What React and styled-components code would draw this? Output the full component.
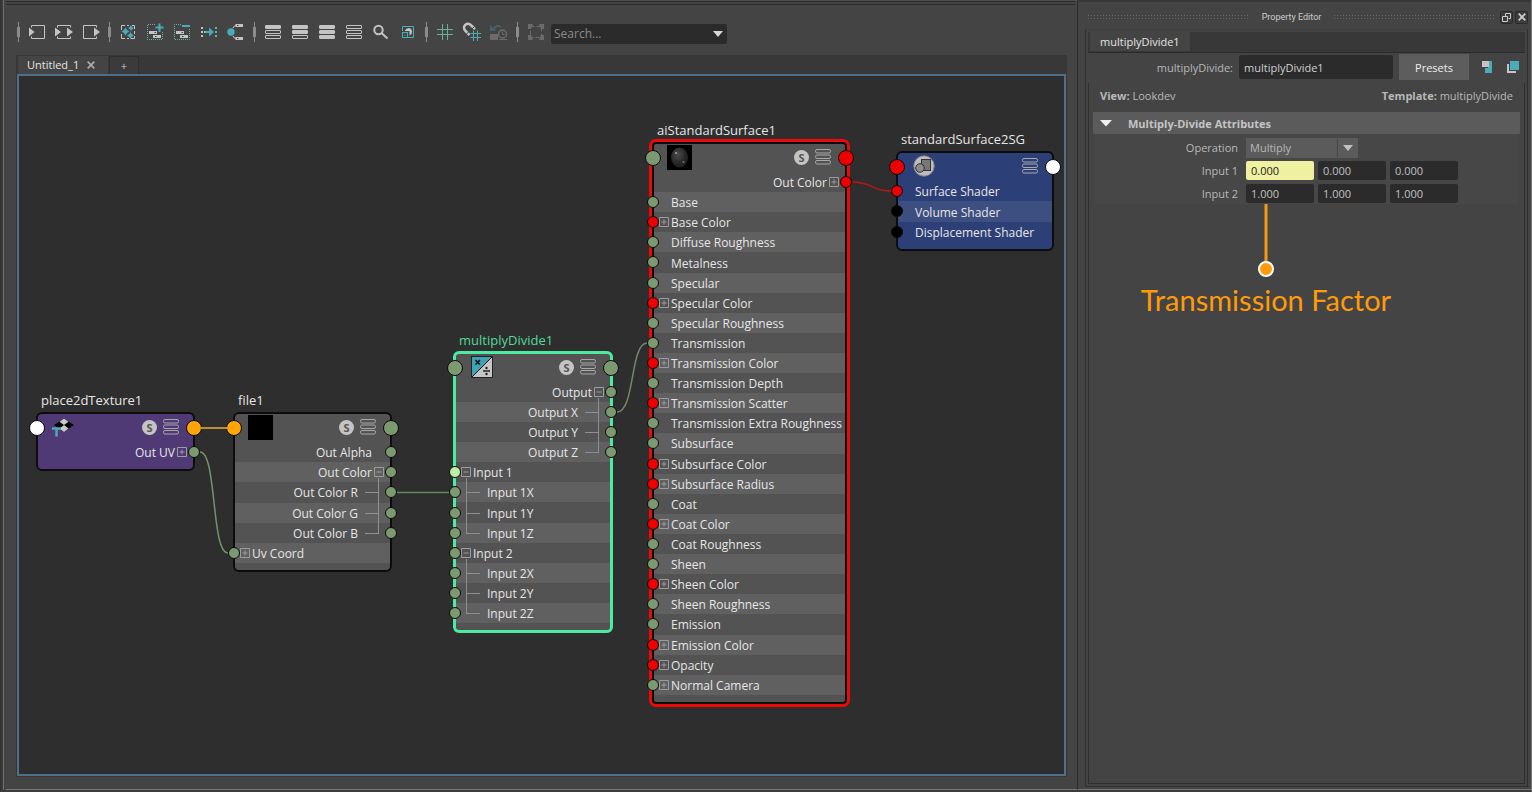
import React from 'react';
import styled, { createGlobalStyle, css } from 'styled-components';

const GlobalStyle = createGlobalStyle`
  *, *::before, *::after { box-sizing: border-box; }
  html, body { margin: 0; background: #444; }
  body { font-family: 'Open Sans', 'Noto Sans', sans-serif; font-size: 11px; color: #ccc; }
  button, input, select { font: inherit; color: inherit; }
  h1, h2, p { margin: 0; font: inherit; }
`;

const Window = styled.div`
  display: grid;
  grid-template-columns: minmax(0, 1fr) 453px;
  height: 100vh;
  min-height: 740px;
  border-left: 1px solid #333;
  border-right: 1px solid #777;
  box-shadow: inset 2px 0 0 #3a3a3a, inset 3px 0 0 #6c6c6c;
  border-bottom: 2px solid #3c3c3c;
  background: #444;
`;

/* Node editor */

const Editor = styled.main`
  display: flex;
  flex-direction: column;
  min-width: 0;
  margin-left: 5px;
  border-top: 1px solid #4a4a4a;
  border-right: 1px solid #2b2b2b;
  border-bottom: 1px solid #777;
`;

const DockEdge = styled.div`
  height: 4px;
  margin-right: 2px;
  border-top: 1px solid #2b2b2b;
  border-bottom: 1px solid #2b2b2b;
  flex: none;
`;

const Toolbar = styled.div`
  display: flex;
  align-items: center;
  height: 50px;
  padding: 4px 0 0 7px;
  flex: none;
`;

const ToolButton = styled.button`
  display: grid;
  place-items: center;
  width: 27px;
  height: 24px;
  padding: 0;
  border: 0;
  background: none;
  flex: none;
  opacity: ${(p) => (p.$faded ? 0.3 : 1)};
`;

const Separator = styled.span`
  display: grid;
  place-items: center;
  width: 10px;
  height: 20px;
  flex: none;
  background:
    linear-gradient(#8c8c8c, #8c8c8c) center / 3px 10px no-repeat,
    linear-gradient(#8c8c8c, #8c8c8c) center / 1px 20px no-repeat;
`;

const SearchBox = styled.div`
  display: flex;
  align-items: center;
  width: 176px;
  height: 20px;
  margin: 3px 0 0 2px;
  border-radius: 2px;
  background: #2b2b2b;
`;

const SearchInput = styled.input`
  flex: 1;
  min-width: 0;
  height: 20px;
  padding: 0 3px;
  border: 0;
  background: none;
  font-size: 12px;
  outline: none;
  &::placeholder { color: #8a8a8a; opacity: 1; }
`;

const SearchArrow = styled.button`
  display: grid;
  place-items: center;
  width: 19px;
  height: 20px;
  padding: 0;
  border: 0;
  background: none;
`;

const Workspace = styled.section`
  display: flex;
  flex-direction: column;
  flex: 1;
  min-height: 0;
  margin: 0 10px 12px 10px;
  border: 1px solid #363636;
  background: #383838;
`;

const TabStrip = styled.div`
  display: flex;
  gap: 1px;
  height: 18px;
  padding-left: 1px;
  flex: none;
`;

const GraphTab = styled.div`
  display: flex;
  align-items: center;
  gap: 8px;
  width: 90px;
  padding-left: 9px;
  background: #444;
  color: #e4e4e4;
`;

const TabText = styled.button`
  padding: 0;
  border: 0;
  background: none;
  line-height: 20px;
`;

const IconButton = styled.button`
  display: grid;
  place-items: center;
  padding: 0;
  border: 0;
  background: none;
`;

const AddTab = styled.button`
  width: 30px;
  padding: 0;
  border: 1px solid #303030;
  border-bottom: 0;
  border-radius: 2px 2px 0 0;
  background: #3b3b3b;
  color: #ccc;
  line-height: 16px;
`;

const Canvas = styled.div`
  position: relative;
  flex: 1;
  min-height: 0;
  border: 2px solid #4d6f88;
  background: #2e2e2e;
  overflow: hidden;
`;

const Wires = styled.svg`
  position: absolute;
  inset: 0;
  width: 100%;
  height: 100%;
  fill: none;
`;

/* Nodes */

const skins = {
  grey: { base: '#535353', band: '#606060' },
  purple: { base: '#4f3a76', band: '#4f3a76' },
  blue: { base: '#2d3f77', band: '#3d4e80' },
};

const NodeCard = styled.article`
  position: absolute;
  left: ${(p) => p.$x}px;
  top: ${(p) => p.$y}px;
  width: ${(p) => p.$w}px;
  padding-bottom: 7px;
  border: 2px solid #0c0c0c;
  border-radius: 6px;
  background: ${(p) => skins[p.$skin].base};
  color: #e6e6e6;
  font-size: 12px;
  ${(p) => p.$mark === 'green' && css`border: 3px solid #4ceb9f;`}
  ${(p) => p.$mark === 'red' && css`
    border-radius: 4px;
    box-shadow: 0 0 0 3px #ea0a0a;
  `}
`;

const NodeTitle = styled.h2`
  position: absolute;
  left: 3px;
  bottom: 100%;
  padding-bottom: 4px;
  font-size: 13px;
  line-height: 20px;
  white-space: nowrap;
  color: ${(p) => (p.$mark === 'green' ? '#4fdc9b' : '#e6e6e6')};
`;

const NodeHead = styled.header`
  position: relative;
  display: flex;
  align-items: center;
  gap: 6px;
  height: 28px;
  padding: 0 14px 2px 13px;
`;

const HeadSpace = styled.span`
  flex: 1;
`;

const Solo = styled.span`
  display: grid;
  place-items: center;
  width: 15px;
  height: 15px;
  border-radius: 50%;
  background: #c4c4c4;
  color: #555;
  font-size: 11px;
  font-weight: 700;
  line-height: 15px;
`;

const Rows = styled.ul`
  display: flex;
  flex-direction: column;
  height: ${(p) => p.$h}px;
  margin: 0;
  padding: 0;
  list-style: none;
`;

const Row = styled.li`
  position: relative;
  display: flex;
  flex: 1 1 0;
  min-height: 0;
  align-items: center;
  flex-direction: ${(p) => (p.$out ? 'row-reverse' : 'row')};
  padding: 0 ${(p) => (p.$out ? 6 : 5)}px 0 5px;
  gap: 2px;
  white-space: nowrap;
  background: ${(p) => (p.$band ? skins[p.$skin].band : 'transparent')};
`;

const RowLabel = styled.span`
  padding-top: 2px;
  line-height: 20px;
`;

const Slot = styled.span`
  display: grid;
  place-items: center;
  width: ${(p) => (p.$wide ? 24 : 10)}px;
  height: 20px;
  flex: none;
`;

const Dot = styled.span`
  position: absolute;
  top: 50%;
  ${(p) => (p.$side === 'left' ? 'left' : 'right')}: ${(p) => (p.$big ? -9 : -7)}px;
  width: ${(p) => (p.$big ? 16 : 12)}px;
  height: ${(p) => (p.$big ? 16 : 12)}px;
  margin-top: ${(p) => (p.$big ? -8 : -6)}px;
  border: 1px solid #0a0a0a;
  border-radius: 50%;
  background: ${(p) => p.$tone};
`;

const Picture = styled.span`
  display: grid;
  place-items: center;
  width: 25px;
  height: 25px;
  background: ${(p) => (p.$black ? '#000' : 'transparent')};
`;

/* Property editor */

const Panel = styled.aside`
  display: flex;
  flex-direction: column;
  padding: 0 3px 2px 7px;
  border-top: 2px solid #383838;
  border-bottom: 1px solid #777;
`;

const PanelBar = styled.header`
  display: flex;
  align-items: center;
  gap: 12px;
  height: 27px;
  padding: 3px 0 0 2px;
  font-family: Roboto, 'Open Sans', sans-serif;
  font-size: 9px;
  flex: none;
`;

const Grip = styled.span`
  flex: 1;
  height: 6px;
  background: radial-gradient(circle, #777 0 1px, transparent 1px) 0 0 / 3px 3px;
  opacity: 0.75;
`;

const BarButtons = styled.span`
  display: flex;
  gap: 2px;
  margin-left: -8px;
`;

const BarButton = styled.button`
  display: grid;
  place-items: center;
  width: 13px;
  height: 13px;
  padding: 0;
  border: 1px solid #2b2b2b;
  border-radius: 2px;
  background: #3c3c3c;
`;

const PanelFrame = styled.div`
  display: flex;
  flex-direction: column;
  flex: 1;
  padding: 2px;
  border: 1px solid #2f2f2f;
  border-top-color: #404040;
`;

const PanelTabs = styled.div`
  height: 21px;
  padding-left: 2px;
  border-bottom: 1px solid #2b2b2b;
  background: #383838;
`;

const PanelTab = styled.button`
  display: block;
  width: 100px;
  height: 19px;
  padding: 0 0 0 10px;
  border: 0;
  background: #444;
  color: #e4e4e4;
  text-align: left;
`;

const NameRow = styled.div`
  display: flex;
  align-items: center;
  height: 30px;
  padding: 0 6px 2px 0;
`;

const NameLabel = styled.label`
  flex: 1;
  padding-right: 6px;
  text-align: right;
  color: #b8b8b8;
`;

const NameInput = styled.input`
  width: 154px;
  height: 24px;
  padding: 0 5px;
  border: 0;
  border-radius: 2px;
  background: #2b2b2b;
  color: #d0d0d0;
`;

const Presets = styled.button`
  width: 70px;
  height: 26px;
  margin: 0 11px 0 6px;
  padding: 0;
  border: 0;
  background: #5d5d5d;
  color: #eee;
`;

const CopyButtons = styled.span`
  display: flex;
  gap: 12px;
`;

const PanelBody = styled.div`
  flex: 1;
  padding: 0 4px;
  border: 1px solid #2f2f2f;
  border-top: 0;
`;

const Facts = styled.div`
  display: flex;
  justify-content: space-between;
  padding: 6px 7px 9px;
  line-height: 14px;
  color: #b8b8b8;
`;

const SectionHead = styled.button`
  display: flex;
  align-items: center;
  gap: 16px;
  width: 100%;
  height: 22px;
  padding: 0 7px;
  border: 0;
  border-radius: 1px;
  background: #5b5b5b;
  color: #c4c4c4;
  font-weight: 700;
`;

const Fields = styled.div`
  display: flex;
  flex-direction: column;
  gap: 4px;
  margin: 0 2px;
  padding: 4px 0 1px;
  background: #474747;
`;

const Field = styled.div`
  display: flex;
  align-items: center;
  gap: 4px;
  height: 19px;
`;

const FieldLabel = styled.label`
  width: 147px;
  padding-right: 4px;
  text-align: right;
  color: #b8b8b8;
`;

const NumberInput = styled.input`
  width: 68px;
  height: 19px;
  padding: 0 5px;
  border: 0;
  border-radius: 2px;
  background: ${(p) => (p.$lit ? '#eff0a0' : '#2b2b2b')};
  color: ${(p) => (p.$lit ? '#222' : '#c0c0c0')};
`;

const SelectWrap = styled.span`
  display: grid;
  grid-template-columns: 92px 20px;
  height: 20px;
  background: linear-gradient(#474747, #474747) 91px 0 / 1px 100% no-repeat #5b5b5b;
`;

const OperationSelect = styled.select`
  grid-area: 1 / 1 / 2 / 3;
  appearance: none;
  padding: 0 4px;
  border: 0;
  background: none;
  color: #b8b8b8;
`;

const SelectArrow = styled.svg`
  grid-area: 1 / 2;
  place-self: center;
  pointer-events: none;
`;

/* Callout laid over the panel */

const CalloutAnchor = styled.div`
  position: relative;
`;

const Callout = styled.figure`
  position: absolute;
  left: 47px;
  top: 0;
  display: flex;
  flex-direction: column;
  align-items: center;
  width: 252px;
  margin: 0;
  color: #ff9a0a;
`;

const CalloutText = styled.figcaption`
  padding-top: 4px;
  font-family: Lato, 'Noto Sans', sans-serif;
  font-size: 29px;
  line-height: 36px;
  white-space: nowrap;
`;

/* Icons */

const Icon = ({ children, size = 20, box = 20 }) => (
  <svg width={size} height={size} viewBox={`0 0 ${box} ${box}`} fill="none" aria-hidden="true">
    {children}
  </svg>
);

const L = '#c4c4c4';
const T = '#4aacb8';
const G = '#66b296';

const Stack = ({ filled }) => (
  <Icon>
    {[3, 8, 13].map((y, i) => (
      <rect key={y} x="2.5" y={y + 0.5} width="15" height="3" rx="0.5" stroke={L} fill={i < filled ? L : 'none'} />
    ))}
  </Icon>
);

const star = (x, y, r) => `M${x} ${y - r}Q${x + r / 4} ${y - r / 4} ${x + r} ${y}Q${x + r / 4} ${y + r / 4} ${x} ${y + r}Q${x - r / 4} ${y + r / 4} ${x - r} ${y}Q${x - r / 4} ${y - r / 4} ${x} ${y - r}Z`;

const Dotted = ({ plus }) => (
  <Icon>
    <path d={plus ? 'M10 2.5H2.5V17.5H17.5V10' : 'M9 2.5H2.5V17.5H17.5V7'} stroke={G} strokeDasharray="1 1" />
    <path d={plus ? 'M14.5 1.5V10M10.5 5.5H18.5' : 'M10 4H18'} stroke={T} strokeWidth="2" />
    <rect x="4" y="9" width="8" height="3" fill={L} />
    <rect x="8" y="13" width="8" height="3" fill={L} />
    <path d="M9.5 10.5H11M10 14.5H11.5" stroke="#444" />
  </Icon>
);

const toolGroups = [
  [
    ['Input connections', <Icon><path d="M4.5 5.5V3.5H17.5V16.5H4.5V14.5" stroke={L} /><path d="M2 5.5L7.5 10L2 14.5Z" fill={L} /></Icon>],
    ['Input and output connections', <Icon><path d="M3.5 5.5V3.5H16.5V5.5M3.5 14.5V16.5H16.5V14.5" stroke={L} /><path d="M1 5.5L7 10L1 14.5ZM13 5.5L19 10L13 14.5Z" fill={L} /></Icon>],
    ['Output connections', <Icon><path d="M15.5 5.5V3.5H2.5V16.5H15.5V14.5" stroke={L} /><path d="M13 5.5L19 10L13 14.5Z" fill={L} /></Icon>],
  ],
  [
    ['Clear graph', <Icon><path d="M3.5 8V3.5H7M9 3.5H11M14 3.5H16.5V7M16.5 9V12M16.5 14V16.5H13M11 16.5H9M7 16.5H3.5V12" stroke={L} /><path d={star(7.5, 9.5, 4) + star(13, 6, 3) + star(12.5, 13.5, 3.5)} fill={T} /></Icon>],
    ['Add selected nodes', <Dotted plus />],
    ['Remove selected nodes', <Dotted />],
    ['Rearrange graph', <Icon><path d="M2 5h2v2h-2zM2 9h2v2h-2zM2 13h2v2h-2zM5 9h1v2h-1z" fill={L} /><path d="M6 10H11" stroke={T} strokeWidth="2" /><path d="M10 5.5L15 10L10 14.5Z" fill={T} /><path d="M16 5h2v2h-2zM16 9h2v2h-2zM16 13h2v2h-2z" fill={G} /></Icon>],
    ['Traversal depth', <Icon><circle cx="5" cy="10" r="3.7" fill={T} /><path d="M7 6Q8 3.5 10 3.5M7 14Q8 16.5 10 16.5" stroke={L} /><path d="M9.5 2H17V5H9.5ZM9.5 15H17V18H9.5Z" fill={L} /><path d="M11 3.5H12.5M11 16.5H12.5" stroke="#444" /></Icon>],
  ],
  [
    ['Simple view', <Stack filled={1} />],
    ['Connected view', <Stack filled={2} />],
    ['Full view', <Stack filled={3} />],
    ['Custom view', <Stack filled={0} />],
    ['Find nodes', <Icon><circle cx="7.5" cy="8" r="4.2" stroke={L} strokeWidth="2" /><path d="M10.5 11L16.5 16.5" stroke={L} strokeWidth="2" /></Icon>],
    ['Swatch size', <Icon><path d="M4.5 9V4.5H15.5V15.5H10" stroke={T} /><path d="M7 8.5Q8 6 11 6Q14 6.5 14 10Q14 12.5 11.5 13.5V9H7Z" fill={L} /><rect x="4.5" y="10.5" width="5" height="5" fill="#444" stroke={T} /><rect x="6.5" y="12.5" width="1" height="1" fill={T} /></Icon>],
  ],
  [
    ['Toggle grid', <Icon><path d="M7.5 2V18M12.5 2V18M2 7.5H18M2 12.5H18" stroke={G} /></Icon>],
    ['Snap to grid', <Icon><path d="M7.5 13L3 8.5A4 4 0 0 1 8.8 3L13 7.2" stroke={L} strokeWidth="2.5" /><path d="M4.600 12L7 9.600M10 7L12.500 4.500" stroke="#444" /><path d="M11.5 8.5V19M15.5 8.5V19M8.5 11.5H19M8.5 15.5H19" stroke={T} /></Icon>],
    ['Restore last graph', <Icon><path d="M4 8Q7 2 12 5" stroke={T} strokeWidth="2" /><path d="M1 3V9H7Z" fill={T} /><path d="M1 12H9V18H1Z" fill={L} /><circle cx="13.5" cy="12" r="4" stroke={L} strokeWidth="1.5" /><path d="M13.5 9.5V12.5H15.5M10 17.5H18" stroke={L} /></Icon>, true],
  ],
  [
    ['Frame selection', <Icon><rect x="4.5" y="4.5" width="11" height="11" stroke={L} strokeDasharray="4 2" /><path d="M2 2H7L5 7H2ZM18 2H13L15 7H18ZM2 18H7L5 13H2ZM18 18H13L15 13H18Z" fill={L} /></Icon>, true],
  ],
];

const Bars = () => (
  <Icon size={16} box={16}>
    {[0.5, 6, 11.5].map((y) => (
      <rect key={y} x="0.5" y={y} width="15" height="3.5" rx="1.5" stroke="#a9a9a9" />
    ))}
  </Icon>
);

const Expander = ({ open }) => (
  <Icon size={10} box={10}>
    <path d={open ? 'M.5.5H9.5V9.5H.5ZM2.5 5H7.5' : 'M.5.5H9.5V9.5H.5ZM2.5 5H7.5M5 2.5V7.5'} stroke="#9c9c9c" />
  </Icon>
);

const BranchLine = styled.svg`
  display: block;
  overflow: visible;
`;

/* Tree guide for nested attributes, mirrored on the output side. */
const Branch = ({ out, last, first }) => (
  <BranchLine width="24" height="20" viewBox="0 0 24 20" aria-hidden="true">
    <path
      d={out
        ? `M5 10.5H18.5M18.5 ${first ? -4 : 0}V${last ? 11 : 21}`
        : `M19 10.5H5.5M5.5 ${first ? -4 : 0}V${last ? 11 : 21}`}
      stroke="#8f8f8f"
      fill="none"
    />
  </BranchLine>
);

const pictures = {
  texture: (
    <svg width="23" height="20" viewBox="0 0 23 20">
      <path d="M12 1.5L22 8L12 15L2 8Z" fill="#000" />
      <path d="M12 1.500L16.500 4.700L12 8L7.500 4.700ZM12 8L16.500 11.500L12 15L7.500 11.500Z" fill="#c9c9c9" />
      <path d="M0 11.5H9M4.500 11V19.500" stroke="#4aacb8" strokeWidth="2.5" />
    </svg>
  ),
  blank: null,
  math: (
    <svg width="22" height="22" viewBox="0 0 22 22">
      <rect width="22" height="22" fill="#c6c6c6" />
      <path d="M0 0H22L0 22Z" fill="#3fa3b3" />
      <path d="M0 22L22 0" stroke="#111" />
      <path d="M4.5 4L9 8.5M9 4L4.5 8.5" stroke="#111" strokeWidth="1.5" />
      <path d="M12 15H19" stroke="#222" strokeWidth="1.5" />
      <circle cx="15.5" cy="12" r="1.2" fill="#222" />
      <circle cx="15.5" cy="18" r="1.2" fill="#222" />
      <rect x=".5" y=".5" width="21" height="21" fill="none" stroke="#222" />
    </svg>
  ),
  ball: (
    <svg width="25" height="25" viewBox="0 0 25 25">
      <defs>
        <radialGradient id="ball" cx="40%" cy="35%">
          <stop offset="0" stopColor="#4c4c4c" />
          <stop offset="1" stopColor="#222" />
        </radialGradient>
      </defs>
      <ellipse cx="12.5" cy="12.5" rx="8.5" ry="10" fill="url(#ball)" />
      <circle cx="9" cy="8" r="1" fill="#aaa" />
      <circle cx="16.5" cy="17" r="1" fill="#777" />
    </svg>
  ),
  group: (
    <svg width="22" height="22" viewBox="0 0 22 22">
      <circle cx="11" cy="11" r="10.2" fill="#bdbdbd" stroke="#888" />
      <rect x="8.5" y="4.5" width="9" height="11" fill="#777" stroke="#333" />
      <circle cx="7" cy="13" r="4.3" fill="#8c8c8c" stroke="#333" />
    </svg>
  ),
};

/* Graph data */

const sage = '#7c9a70';
const red = '#ee0000';
const orange = '#ffa50a';
const lime = '#bdf0a2';

const out = (label, extra) => ({ label, out: true, ...extra });
const inp = (label, extra) => ({ label, ...extra });
const colour = (label) => ({ label, expand: 'closed', tone: red });

const nodes = [
  {
    title: 'place2dTexture1', x: 17, y: 336, w: 159, h: 20, skin: 'purple', picture: 'texture', solo: true,
    left: '#fff', right: orange,
    rows: [out('Out UV', { expand: 'closed' })],
  },
  {
    title: 'file1', x: 214, y: 336, w: 159, h: 121, skin: 'grey', picture: 'blank', solo: true,
    left: orange, right: sage,
    rows: [
      out('Out Alpha'),
      out('Out Color', { expand: 'open' }),
      out('Out Color R', { branch: 'first' }),
      out('Out Color G', { branch: 'mid' }),
      out('Out Color B', { branch: 'last' }),
      inp('Uv Coord', { expand: 'closed' }),
    ],
  },
  {
    title: 'multiplyDivide1', x: 434, y: 275, w: 160, h: 241, skin: 'grey', mark: 'green', picture: 'math', solo: true,
    left: sage, right: sage,
    rows: [
      out('Output', { expand: 'open' }),
      out('Output X', { branch: 'first' }),
      out('Output Y', { branch: 'mid' }),
      out('Output Z', { branch: 'last' }),
      inp('Input 1', { expand: 'open', tone: lime }),
      inp('Input 1X', { branch: 'first' }),
      inp('Input 1Y', { branch: 'mid' }),
      inp('Input 1Z', { branch: 'last' }),
      inp('Input 2', { expand: 'open' }),
      inp('Input 2X', { branch: 'first' }),
      inp('Input 2Y', { branch: 'mid' }),
      inp('Input 2Z', { branch: 'last' }),
    ],
  },
  {
    title: 'aiStandardSurface1', x: 633, y: 66, w: 195, h: 523, skin: 'grey', mark: 'red', picture: 'ball', solo: true,
    left: sage, right: red,
    rows: [
      out('Out Color', { expand: 'closed', tone: red }),
      inp('Base'),
      colour('Base Color'),
      inp('Diffuse Roughness'),
      inp('Metalness'),
      inp('Specular'),
      colour('Specular Color'),
      inp('Specular Roughness'),
      inp('Transmission'),
      colour('Transmission Color'),
      inp('Transmission Depth'),
      colour('Transmission Scatter'),
      inp('Transmission Extra Roughness'),
      inp('Subsurface'),
      colour('Subsurface Color'),
      colour('Subsurface Radius'),
      inp('Coat'),
      colour('Coat Color'),
      inp('Coat Roughness'),
      inp('Sheen'),
      colour('Sheen Color'),
      inp('Sheen Roughness'),
      inp('Emission'),
      colour('Emission Color'),
      colour('Opacity'),
      inp('Normal Camera', { expand: 'closed' }),
    ],
  },
  {
    title: 'standardSurface2SG', x: 877, y: 75, w: 158, h: 61, skin: 'blue', picture: 'group', solo: false,
    left: red, right: '#fff',
    rows: [
      inp('Surface Shader', { tone: red }),
      inp('Volume Shader', { tone: '#000' }),
      inp('Displacement Shader', { tone: '#000' }),
    ],
  },
];

function GraphNode({ node }) {
  return (
    <NodeCard $x={node.x} $y={node.y} $w={node.w} $skin={node.skin} $mark={node.mark}>
      <NodeTitle $mark={node.mark}>{node.title}</NodeTitle>
      <NodeHead>
        <Picture $black={node.picture === 'blank' || node.picture === 'ball'}>{pictures[node.picture]}</Picture>
        <HeadSpace />
        {node.solo && <Solo>S</Solo>}
        <Bars />
        <Dot $side="left" $big $tone={node.left} />
        <Dot $side="right" $big $tone={node.right} />
      </NodeHead>
      <Rows $h={node.h}>
        {node.rows.map((row, i) => (
          <Row key={row.label} $out={row.out} $band={i % 2 === 1} $skin={node.skin}>
            <Slot $wide={!!row.branch}>
              {row.expand && <Expander open={row.expand === 'open'} />}
              {row.branch && <Branch out={row.out} first={row.branch === 'first'} last={row.branch === 'last'} />}
            </Slot>
            <RowLabel>{row.label}</RowLabel>
            <Dot $side={row.out ? 'right' : 'left'} $tone={row.tone || sage} />
          </Row>
        ))}
      </Rows>
    </NodeCard>
  );
}

function NodeEditor() {
  return (
    <Editor>
      <DockEdge />
      <Toolbar role="toolbar" aria-label="Node editor tools">
        {toolGroups.map((group, g) => (
          <React.Fragment key={g}>
            <Separator />
            {group.map(([name, icon, faded]) => (
              <ToolButton key={name} type="button" aria-label={name} $faded={faded}>{icon}</ToolButton>
            ))}
          </React.Fragment>
        ))}
        <SearchBox>
          <SearchInput type="text" placeholder="Search..." aria-label="Search nodes" />
          <SearchArrow type="button" aria-label="Search options">
            <svg width="10" height="6" viewBox="0 0 10 6"><path d="M0 0H10L5 6Z" fill="#d8d8d8" /></svg>
          </SearchArrow>
        </SearchBox>
      </Toolbar>
      <Workspace>
        <TabStrip>
          <GraphTab>
            <TabText type="button">Untitled_1</TabText>
            <IconButton type="button" aria-label="Close tab">
              <svg width="8" height="8" viewBox="0 0 8 8"><path d="M.7.7L7.3 7.3M7.3.7L.7 7.3" stroke="#aaa" strokeWidth="1.8" /></svg>
            </IconButton>
          </GraphTab>
          <AddTab type="button" aria-label="New tab">+</AddTab>
        </TabStrip>
        <Canvas>
          {nodes.map((n) => <GraphNode key={n.title} node={n} />)}
          <Wires aria-hidden="true">
            <path d="M182 352H208" stroke="#b98f35" strokeWidth="2" />
            <path d="M181 376C198 376 192 477 209 477" stroke="#75916b" strokeWidth="1.5" />
            <path d="M378 416.5H430" stroke="#66885f" strokeWidth="1.5" />
            <path d="M598 336C616 336 611 267 628 267" stroke="#75866b" strokeWidth="1.5" />
            <path d="M833 106C853 106 853 115 872 115" stroke="#c01414" strokeWidth="1.5" />
          </Wires>
        </Canvas>
      </Workspace>
    </Editor>
  );
}

const vectors = [
  ['Input 1', ['0.000', '0.000', '0.000'], 0],
  ['Input 2', ['1.000', '1.000', '1.000'], -1],
];

function PropertyEditor() {
  return (
    <Panel>
      <PanelBar>
        <Grip />
        <h1>Property Editor</h1>
        <Grip />
        <BarButtons>
          <BarButton type="button" aria-label="Float panel">
            <svg width="9" height="9" viewBox="0 0 9 9" fill="none" stroke="#ccc"><path d="M3.5 3V.5H8.5V5.5H6.5M.5 3.5H5.5V8.5H.5Z" /></svg>
          </BarButton>
          <BarButton type="button" aria-label="Close panel">
            <svg width="8" height="8" viewBox="0 0 8 8"><path d="M.7.7L7.3 7.3M7.3.7L.7 7.3" stroke="#ccc" strokeWidth="1.8" /></svg>
          </BarButton>
        </BarButtons>
      </PanelBar>
      <PanelFrame>
        <PanelTabs>
          <PanelTab type="button">multiplyDivide1</PanelTab>
        </PanelTabs>
        <NameRow>
          <NameLabel htmlFor="node-name">multiplyDivide:</NameLabel>
          <NameInput id="node-name" type="text" defaultValue="multiplyDivide1" />
          <Presets type="button">Presets</Presets>
          <CopyButtons>
            <IconButton type="button" aria-label="Go to output">
              <svg width="14" height="14" viewBox="0 0 14 14"><path d="M8 1H12V13H5V8H8Z" fill="#4aacb8" /><path d="M2 1H9V7H2Z" fill="#c4c4c4" /></svg>
            </IconButton>
            <IconButton type="button" aria-label="Copy tab">
              <svg width="13" height="14" viewBox="0 0 13 14"><path d="M1 4V13H10V11H3V4Z" fill="#c4c4c4" /><path d="M4 1H13V10H4Z" fill="#4aacb8" /></svg>
            </IconButton>
          </CopyButtons>
        </NameRow>
        <PanelBody>
          <Facts>
            <p><b>View:</b> Lookdev</p>
            <p><b>Template:</b> multiplyDivide</p>
          </Facts>
          <SectionHead type="button">
            <svg width="12" height="7" viewBox="0 0 12 7"><path d="M0 0H12L6 6.5Z" fill="#f0f0f0" /></svg>
            Multiply-Divide Attributes
          </SectionHead>
          <Fields>
            <Field>
              <FieldLabel htmlFor="operation">Operation</FieldLabel>
              <SelectWrap>
                <OperationSelect id="operation" defaultValue="Multiply">
                  <option>No operation</option>
                  <option>Multiply</option>
                  <option>Divide</option>
                  <option>Power</option>
                </OperationSelect>
                <SelectArrow width="10" height="6" viewBox="0 0 10 6"><path d="M0 0H10L5 6Z" fill="#c0c0c0" /></SelectArrow>
              </SelectWrap>
            </Field>
            {vectors.map(([label, values, lit]) => (
              <Field key={label}>
                <FieldLabel htmlFor={`${label}-0`}>{label}</FieldLabel>
                {values.map((value, i) => (
                  <NumberInput key={i} id={`${label}-${i}`} type="text" defaultValue={value} aria-label={i ? `${label} component ${i + 1}` : undefined} $lit={i === lit} />
                ))}
              </Field>
            ))}
          </Fields>
          <CalloutAnchor>
            <Callout>
              <svg width="18" height="74" viewBox="0 0 18 74">
                <path d="M9 0V58" stroke="#f59a14" strokeWidth="3" />
                <circle cx="9" cy="65" r="7" fill="#ff9a0a" stroke="#fff" strokeWidth="2" />
              </svg>
              <CalloutText>Transmission Factor</CalloutText>
            </Callout>
          </CalloutAnchor>
        </PanelBody>
      </PanelFrame>
    </Panel>
  );
}

export default function App() {
  return (
    <>
      <GlobalStyle />
      <Window>
        <NodeEditor />
        <PropertyEditor />
      </Window>
    </>
  );
}
